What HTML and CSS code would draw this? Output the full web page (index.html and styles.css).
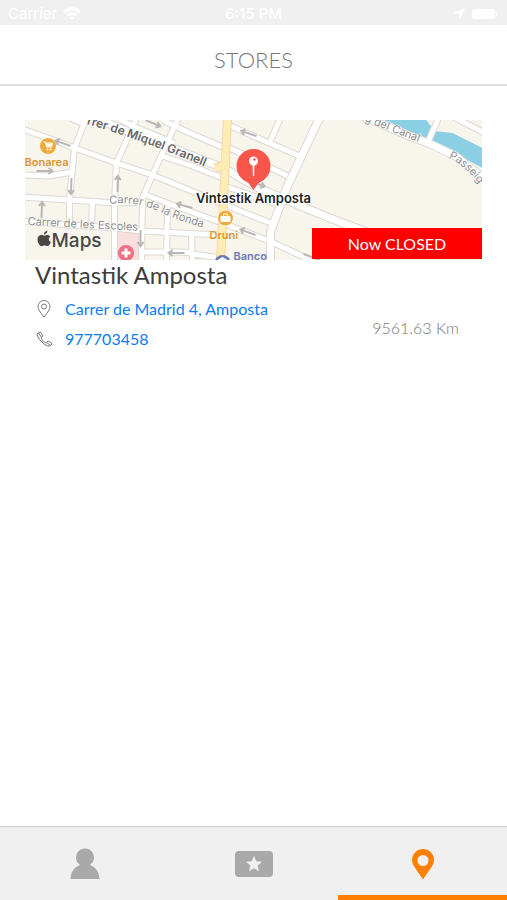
FILE: index.html
```
<!DOCTYPE html>
<html lang="en">

<head>
  <meta charset="utf-8">
  <meta name="viewport" content="width=device-width, initial-scale=1">
  <title>Stores</title>
  <link rel="stylesheet" href="styles.css">
</head>

<body>
  <div class="status">
    <div class="status-left">
      <span>Carrier</span>
      <svg width="18" height="14" viewBox="0 0 18 14" fill="none" stroke="#fff" stroke-width="3">
        <path d="M1 5.500Q9-2 17 5.500M4 8.500Q9 4 14 8.500" />
        <path d="M6.500 10.500L9 13l2.500-2.500Q9 8.500 6.500 10.500z" fill="#fff" stroke="none" />
      </svg>
    </div>
    <span class="status-time">6:15 PM</span>
    <div class="status-right">
      <svg width="12" height="12" viewBox="0 0 12 12" fill="#fff"><path d="M12 0L7 12 6 6 0 5z" /></svg>
      <svg width="28" height="12" viewBox="0 0 28 12" fill="#fff"><rect x="1" y="1" width="23" height="10" rx="3" /><path d="M25 4q2 2 0 4z" /></svg>
    </div>
  </div>

  <header>
    <h1>STORES</h1>
  </header>

  <main>
    <article class="store">
      <div class="map">
        <svg class="map-img" viewBox="0 0 458 140" preserveAspectRatio="xMidYMid slice" role="img" aria-label="Map of Amposta">
          <defs>
            <g id="roads" fill="none" stroke-linejoin="round">
              <path d="M-2 9L32 21 50 28 92 43 128 55 155 66 198 84 246 103" />
              <path d="M-2 55L24 56 48 52" />
              <path d="M-2 77L45 80 92 83 119 82" />
              <path d="M-2 101L46 105 90 108 118 111 155 113 195 115" />
              <path d="M62-2L50 28 45 78 45 106" />
              <path d="M68 82L67 106" />
              <path d="M112-2L92 43 90 83 90 142" />
              <path d="M154-2L128 55 118 78 117 142" />
              <path d="M46-2L62 5M93-2L108 6 150 23" />
              <path d="M138 0L163 12 200 28" />
              <path d="M138 36L165 45 198 58" />
              <path d="M119 74L145 84 198 103 245 121 290 142" />
              <path d="M118 132L155 132 167 133M143 86L142 142M167 114L168 142M168 134L196 138" />
              <path d="M204 5L240 21 275 36M256-2L245 23" />
              <path d="M203 27L230 40 263 56M200 66L252 84" />
              <path d="M429-3L460 13" />
              <path d="M414-2L403 23" />
            </g>
            <g id="avenues" fill="none" stroke-linejoin="round">
              <path d="M66-5L94 8 128 20 160 33 199 48 232 67 262 80 305 98 345 113" />
              <path d="M295-2L262 68 246 112 246 142" />
              <path d="M338-4L380 14 406 24 431 36 460 59" />
            </g>
            <path id="arrow" d="M0 0h15M12-3l4 3-4 3" fill="none" stroke="#b8b7b6" stroke-width="2" />
            <path id="granell" d="M62 4Q125 22 202 56" />
            <path id="ronda" d="M85 84Q112 81 133 91T184 109" />
            <path id="canal" d="M340 1Q368 12 404 26" />
            <path id="passeig" d="M424 38Q444 46 466 80" />
          </defs>

          <rect width="458" height="140" fill="#f8f5ed" />
          <path d="M93 111h21v29H92z" fill="#f9dfdd" />
          <path d="M357-1H401L410 11 428 13 458 28V48L428 32 400 19 376 7z" fill="#8bcfe4" />

          <use href="#roads" stroke="#dcd8d3" stroke-width="7" />
          <use href="#avenues" stroke="#dcd8d3" stroke-width="9" />
          <use href="#roads" stroke="#fff" stroke-width="5" />
          <use href="#avenues" stroke="#fff" stroke-width="7" />
          <path d="M203-2L200 62 196 142M200 45L190 48" fill="none" stroke="#f7d6a4" stroke-width="9" />
          <path d="M203-2L200 62 196 142M200 45L190 48" fill="none" stroke="#ffedb5" stroke-width="7" />

          <use href="#arrow" transform="translate(46 26) rotate(200)" />
          <use href="#arrow" transform="translate(12 51)" />
          <use href="#arrow" transform="translate(47 58) rotate(92)" />
          <use href="#arrow" transform="translate(93 72) rotate(-89)" />
          <use href="#arrow" transform="translate(17 98) rotate(-88)" />
          <use href="#arrow" transform="translate(116 110) rotate(90)" />
          <use href="#arrow" transform="translate(121 0) rotate(23)" />
          <use href="#arrow" transform="translate(232 16) rotate(198)" />
          <use href="#arrow" transform="translate(168 88) rotate(195)" />
          <use href="#arrow" transform="translate(231 115) rotate(200)" />
          <use href="#arrow" transform="translate(160 133) rotate(180)" />
          <use href="#arrow" transform="translate(225 61) rotate(20)" />
          <use href="#arrow" transform="translate(279 134) rotate(20)" />

          <g class="street">
            <text class="main-street"><textPath href="#granell">rrer de Miquel Granell</textPath></text>
            <text><textPath href="#ronda">Carrer de la Ronda</textPath></text>
            <text x="3" y="105" transform="rotate(3 3 105)">Carrer de les Escoles</text>
            <text><textPath href="#canal">g del Canal</textPath></text>
            <text><textPath href="#passeig">Passeig d</textPath></text>
          </g>

          <circle cx="23.500" cy="26" r="8" fill="#efaa3d" />
          <path d="M19 22h2l1 5h5l1-4h-7" fill="none" stroke="#fff" />
          <path d="M21.500 23.500h6l-1 3h-4z" fill="#fff" />
          <circle cx="23" cy="29.500" r="1" fill="#fff" /><circle cx="26" cy="29.500" r="1" fill="#fff" />
          <text class="place" x="0" y="46">Bonarea</text>

          <circle cx="201" cy="98" r="8" fill="#efaa3d" stroke="#fff" />
          <rect x="196" y="96" width="10" height="6" rx="1" fill="#fff" />
          <path d="M199 96v-2h4v2" fill="none" stroke="#fff" />
          <text class="place" x="185" y="119">Druni</text>

          <circle cx="101.500" cy="133" r="8" fill="#ef6f80" />
          <path d="M101.500 128.500v9M97 133h9" stroke="#fff" stroke-width="3" />
          <circle cx="198" cy="143" r="8" fill="#6d78b5" />
          <path d="M193 140l5-3 5 3z" fill="#fff" />
          <text class="place bank" x="209" y="140">Banco</text>

          <path d="M229 70l-5-7q-12-5-12-17a17 17 0 0 1 34 0q0 12-12 17z" fill="#f9564b" />
          <circle cx="229" cy="41" r="4.500" fill="#fff" /><circle cx="230" cy="39.500" r="1.300" fill="#f9564b" />
          <path d="M228 44h2l-.4 12h-1.200z" fill="#fff" />
          <text class="pin-name" x="229" y="83">Vintastik Amposta</text>

          <g fill="#484844">
            <path d="M20 115.500c1.300 0 2-.8 3.500-.5q1.500.2 2.300 1.500c-2.300 1.600-1.800 4.500.6 5.500-.8 2.300-2 4-3.400 4-1.200 0-1.500-.6-3-.6s-1.800.6-3 .6c-2 0-4-4-4-6.600 0-3 1.900-4.600 3.900-4.500 1.300 0 2.200.6 3.100.6zM19.500 114.500q0-3 3.300-4 .1 3.400-3.300 4z" />
            <text class="brand" x="27" y="127">Maps</text>
          </g>
        </svg>
        <span class="badge">Now CLOSED</span>
      </div>

      <div class="info">
        <h2>Vintastik Amposta</h2>
        <div class="details">
          <ul>
            <li>
              <svg width="18" height="18" viewBox="0 0 18 18" fill="none" stroke="#777"><path d="M9 17Q3 10 3 6.500a6 6 0 0 1 12 0Q15 10 9 17z" /><circle cx="9" cy="6.500" r="2.500" /></svg>
              <a href="#map">Carrer de Madrid 4, Amposta</a>
            </li>
            <li>
              <svg width="18" height="18" viewBox="0 0 18 18" fill="none" stroke="#777" stroke-linejoin="round"><path d="M3 3l2-1q1 0 3 4L6 8q2 4 5 5l2-2q4 2 4 3l-2 2q-2 1-6-2-6-5-7-9 0-1 1-2zM3.500 3L6.500 7.500M11.500 12.500l4 3" /></svg>
              <a href="tel:977703458">977703458</a>
            </li>
          </ul>
          <span class="distance">9561.63 Km</span>
        </div>
      </div>
    </article>
  </main>

  <nav>
    <a href="#profile" aria-label="Profile">
      <svg width="32" height="32" viewBox="0 0 32 32"><path d="M1.500 31c0-7 4-12 9.500-14a9 9 0 1 1 10 0c5.500 2 9.500 7 9.500 14z" /></svg>
    </a>
    <a href="#rewards" aria-label="Rewards">
      <svg width="38" height="32" viewBox="0 0 38 32"><rect y="3" width="38" height="26" rx="4" /><path class="star" d="M19 8l2.300 5.300 5.700.5-4.300 3.800 1.300 5.600-5-3-5 3 1.300-5.600-4.300-3.800 5.700-.5z" /></svg>
    </a>
    <a class="active" href="#stores" aria-label="Stores">
      <svg width="32" height="32" viewBox="0 0 32 32"><path fill-rule="evenodd" d="M16 31.500L7.500 19Q5 15.500 5 12a11 11 0 0 1 22 0q0 3.500-2.500 7zM16 7a5.500 5.500 0 1 0 0 11 5.500 5.500 0 0 0 0-11z" /></svg>
    </a>
  </nav>
</body>

</html>
```
FILE: styles.css
```
* {
  box-sizing: border-box;
}

body {
  background-color: #fff;
  color: #3c3c3c;
  display: flex;
  flex-direction: column;
  font: 16px/20px Lato, sans-serif;
  margin: 0;
  min-height: 100vh;
}

h1,
h2,
ul {
  font-weight: normal;
  list-style: none;
  margin: 0;
  padding: 0;
}

a {
  color: #0b7df0;
  text-decoration: none;
}

svg {
  display: block;
  flex: none;
}

.status {
  align-items: center;
  background-color: #f0f0f0;
  color: #fff;
  display: grid;
  font: 15px/24px Inter, sans-serif;
  grid-template-columns: 1fr auto 1fr;
  height: 25px;
  padding: 2px 8px 0;
}

.status-left,
.status-right {
  align-items: center;
  display: flex;
  gap: 6px;
}

.status-right {
  justify-content: flex-end;
}

.status-time {
  font-weight: 500;
}

header {
  border-bottom: 2px solid #e0e0e0;
  padding: 20px 0 10px;
  text-align: center;
}

h1 {
  color: #777;
  font-size: 22px;
  font-weight: 300;
  line-height: 29px;
}

main {
  flex: 1;
  padding: 34px 25px;
}

.map {
  height: 140px;
  position: relative;
}

.map-img {
  height: 100%;
  width: 100%;
}

.map text {
  font-family: Inter, sans-serif;
}

.street {
  fill: #8e8e8e;
  font-size: 11px;
  paint-order: stroke;
  stroke: #fff;
  stroke-width: 1px;
}

.street .main-street {
  fill: #666;
  font-size: 12px;
  font-weight: 600;
}

.place {
  fill: #dc9632;
  font-size: 11px;
  font-weight: 600;
}

.bank {
  fill: #6d78b5;
}

.pin-name {
  fill: #222;
  font-size: 13px;
  font-weight: 600;
  paint-order: stroke;
  stroke: #fff;
  stroke-width: 2px;
  text-anchor: middle;
}

.brand {
  font-size: 19px;
  font-weight: 500;
}

.badge {
  background-color: #f00;
  bottom: 1px;
  color: #fff;
  line-height: 31px;
  position: absolute;
  right: 0;
  text-align: center;
  width: 170px;
}

.info {
  padding: 0 23px 0 10px;
}

h2 {
  font-size: 24px;
  line-height: 30px;
}

.details {
  align-items: center;
  display: flex;
  justify-content: space-between;
  padding-top: 4px;
}

li {
  align-items: center;
  display: flex;
  gap: 12px;
  line-height: 30px;
}

.distance {
  color: #777;
  font-weight: 300;
  padding-top: 8px;
}

nav {
  background-color: #f0f0f0;
  border-top: 1px solid #ccc;
  display: flex;
}

nav a {
  border-bottom: 5px solid transparent;
  display: flex;
  flex: 1;
  fill: #a9a9a9;
  justify-content: center;
  padding: 21px 0 15px;
}

nav .active {
  border-color: #ff8000;
  fill: #ff8000;
}

.star {
  fill: #f0f0f0;
}
```
